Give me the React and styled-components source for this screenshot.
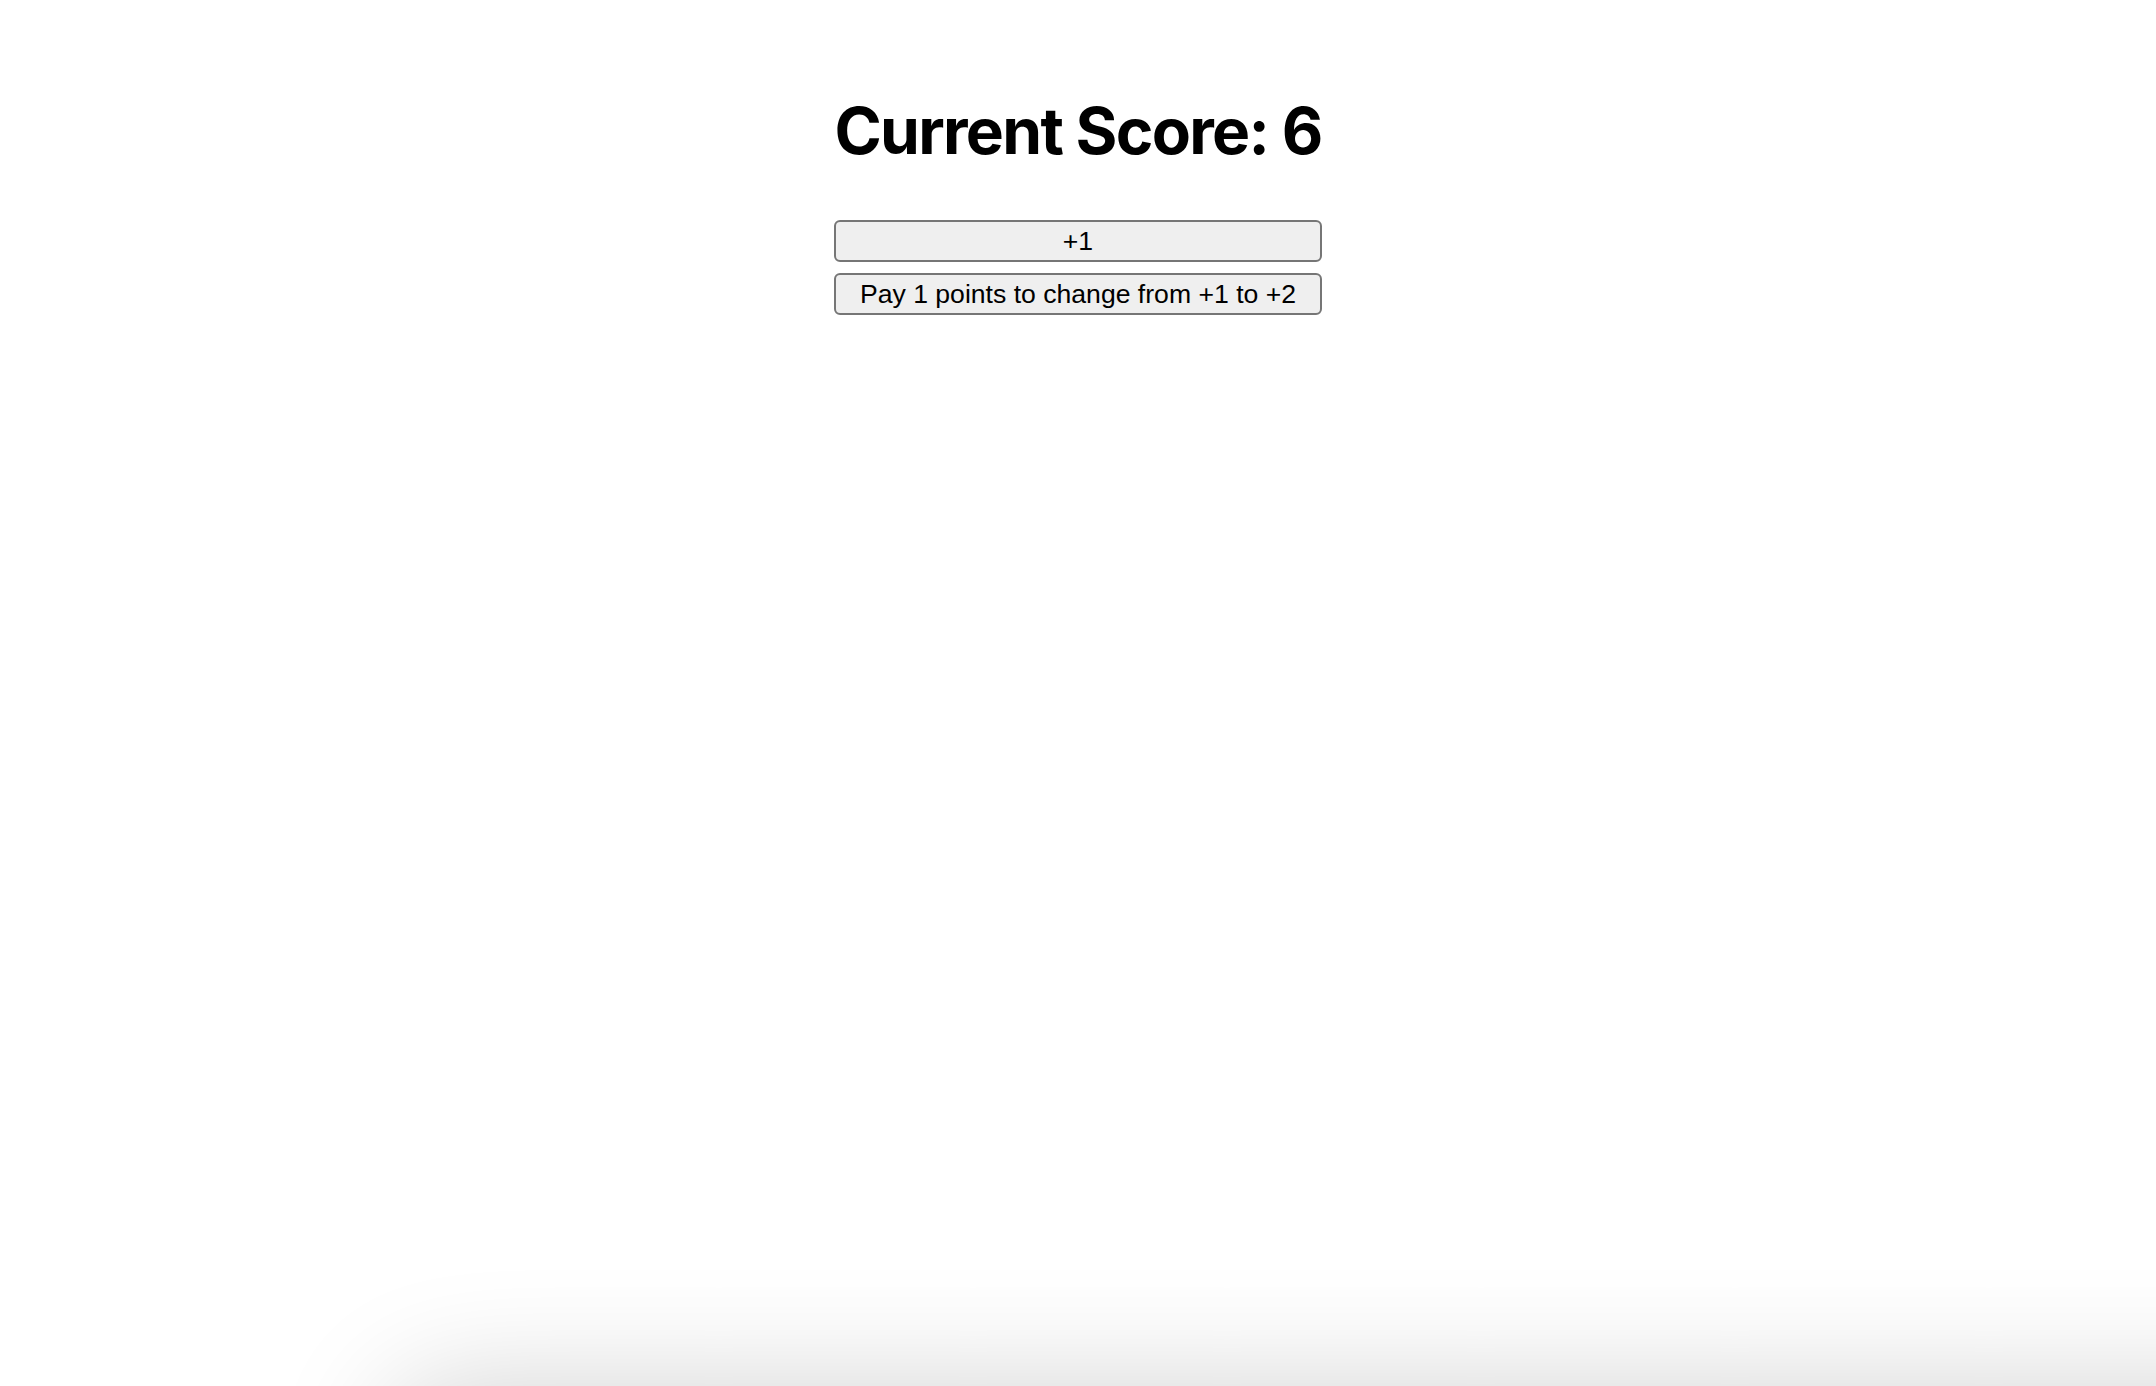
import React, { useState } from 'react'
import styled, { createGlobalStyle } from 'styled-components'

const GlobalStyle = createGlobalStyle`
  html, body {
    margin: 0;
    padding: 0;
    background: #ffffff;
    overflow: hidden;
  }
`

export default function App() {
  const [score, setScore] = useState(6)
  const [inc, setInc] = useState(1)
  const cost = inc

  const onUpgrade = () => {
    if (score < cost) return
    setScore((s) => s - cost)
    setInc((i) => i + 1)
  }

  return (
    <Page>
      <GlobalStyle />
      <Game>
        <Title>Current Score: {score}</Title>
        <Controls>
          <GameButton onClick={() => setScore((s) => s + inc)}>+{inc}</GameButton>
          <GameButton onClick={onUpgrade}>
            Pay {cost} points to change from +{inc} to +{inc + 1}
          </GameButton>
        </Controls>
      </Game>
      <DockShadow />
    </Page>
  )
}

const Page = styled.div`
  min-height: 100vh;
  display: flex;
  justify-content: center;
  align-items: flex-start;
  padding-top: 92px;
  box-sizing: border-box;
`

const Game = styled.div`
  display: flex;
  flex-direction: column;
  align-items: stretch;
  width: 488px;
`

const Title = styled.h1`
  margin: 0 0 51px;
  font-family: Inter, 'Liberation Sans', sans-serif;
  font-weight: 700;
  font-size: 64px;
  letter-spacing: -1.7px;
  color: #000000;
  text-align: center;
  white-space: nowrap;
`

const Controls = styled.div`
  display: flex;
  flex-direction: column;
  gap: 11px;
`

const GameButton = styled.button`
  display: block;
  width: 100%;
  margin: 0;
  padding: 4px 12px;
  font-family: 'Liberation Sans', Arial, sans-serif;
  font-size: 26.6px;
  line-height: 30px;
  color: #000000;
  background: #efefef;
  border: 2px solid #767676;
  border-radius: 6px;
  cursor: pointer;

  &:hover {
    background: #e5e5e5;
  }
`

const DockShadow = styled.div`
  position: fixed;
  top: 100vh;
  left: 390px;
  right: -200px;
  height: 200px;
  border-radius: 60px;
  background: #ffffff;
  box-shadow: 0 0 120px rgba(0, 0, 0, 0.18);
  pointer-events: none;
`
